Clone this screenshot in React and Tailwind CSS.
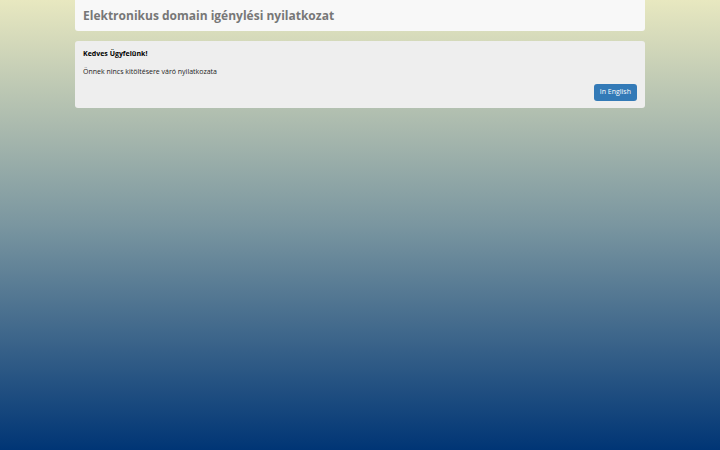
export default function App() {
  return (
    <div
      className="min-h-[450px] bg-[linear-gradient(to_bottom,#e8e8c0_0%,#7a96a0_50%,#003575_100%)]"
      style={{ fontFamily: '"Open Sans", sans-serif' }}
    >
      <div className="mx-auto w-[570px]">
        <div className="h-[31px] rounded-b-[3px] bg-[#f8f8f8] px-2 flex items-center">
          <h1 className="text-[12px] font-bold text-[#777]">
            Elektronikus domain igénylési nyilatkozat
          </h1>
        </div>
        <div className="mt-[10px] rounded-[3px] bg-[#eeeeee] px-2 pt-[8px] pb-[7px]">
          <p className="text-[7px] font-bold text-black leading-[10px]">Kedves Ügyfelünk!</p>
          <p className="mt-[8px] text-[7px] text-[#222] leading-[10px]">
            Önnek nincs kitöltésere váró nyilatkozata
          </p>
          <div className="mt-[7px] flex justify-end">
            <button className="h-[17px] rounded-[3px] bg-[#337ab7] px-[6px] text-[7px] text-white">
              In English
            </button>
          </div>
        </div>
      </div>
    </div>
  );
}
